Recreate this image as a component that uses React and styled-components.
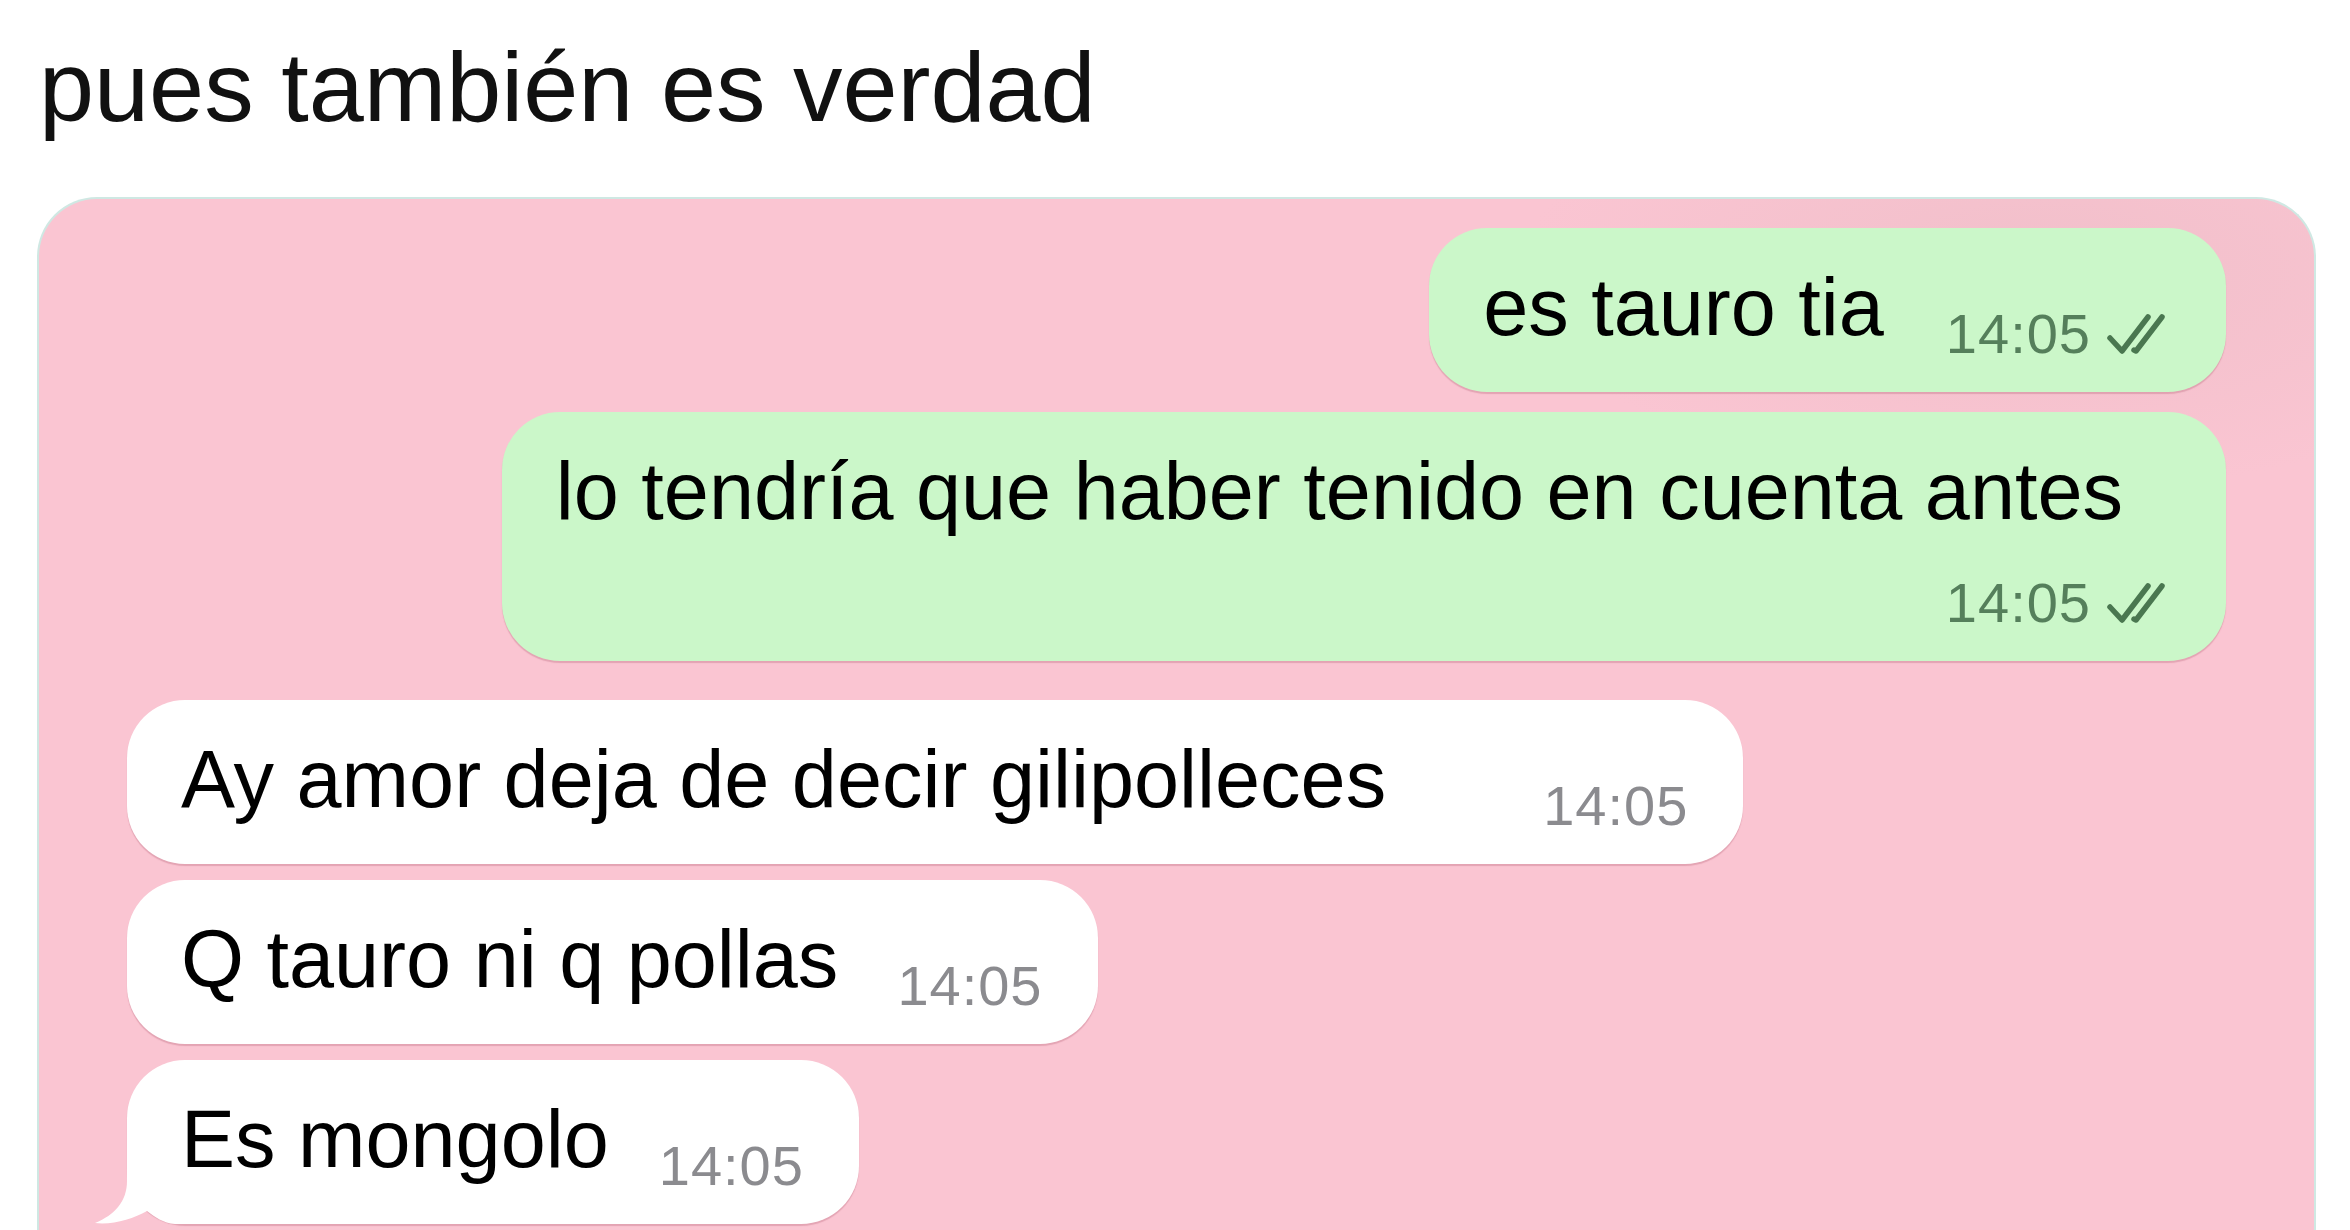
import React from "react";
import styled, { createGlobalStyle } from "styled-components";

const GlobalStyle = createGlobalStyle`
  html, body {
    margin: 0;
    padding: 0;
    background: #ffffff;
    overflow: hidden;
  }
  body {
    font-family: "Liberation Sans", Arial, sans-serif;
  }
`;

const Page = styled.div`
  padding: 37px 34px 0 37px;
  height: 1230px;
  box-sizing: border-box;
`;

const Title = styled.h1`
  margin: 0 0 61px 2px;
  font-size: 99px;
  line-height: 1;
  font-weight: 400;
  color: #111111;
`;

const Card = styled.div`
  border: 2px solid #cfe8e3;
  border-bottom: none;
  border-radius: 60px 60px 0 0;
  background: radial-gradient(ellipse 520px 220px at 88% 6%, #f1bfca 0%, rgba(241, 191, 202, 0) 100%),
    #fac5d2;
  padding: 29px 88px 200px 88px;
  display: flex;
  flex-direction: column;
  gap: 39px;
`;

const Group = styled.div`
  display: flex;
  flex-direction: column;
  align-items: ${(p) => (p.$out ? "flex-end" : "flex-start")};
  gap: ${(p) => (p.$out ? "20px" : "16px")};
`;

const Bubble = styled.div`
  position: relative;
  display: flex;
  flex-direction: ${(p) => (p.$stacked ? "column" : "row")};
  align-items: flex-end;
  box-sizing: border-box;
  min-height: 164px;
  padding: 31px 55px 36px 54px;
  border-radius: 58px;
  background: ${(p) => (p.$out ? "#cbf7c9" : "#ffffff")};
  box-shadow: 0 2px 1px rgba(170, 80, 100, 0.28);
`;

const Text = styled.span`
  position: relative;
  font-size: 81px;
  line-height: 97px;
  color: #000000;
  align-self: ${(p) => (p.$stacked ? "flex-start" : "auto")};
  margin-right: ${(p) => (p.$stacked ? "48px" : "0")};
`;

const Meta = styled.span`
  position: relative;
  display: flex;
  align-items: center;
  gap: 16px;
  margin-left: ${(p) => p.$space}px;
  margin-top: ${(p) => (p.$stacked ? "35px" : "0")};
  margin-bottom: -6px;
  font-size: 56px;
  line-height: 56px;
  letter-spacing: 1px;
  color: ${(p) => (p.$out ? "#557f5b" : "#8b8b8f")};
  white-space: nowrap;
`;

const Tail = styled.svg`
  position: absolute;
  left: -36px;
  bottom: -1px;
  width: 100px;
  height: 80px;
`;

const Ticks = () => (
  <svg width="64" height="42" viewBox="0 0 64 42" fill="none">
    <path
      d="M3 25 L15 38 L41 4"
      stroke="#4a7750"
      strokeWidth="5.5"
      strokeLinecap="round"
      strokeLinejoin="round"
    />
    <path
      d="M27 37 L29 38 L55 4"
      stroke="#4a7750"
      strokeWidth="5.5"
      strokeLinecap="round"
      strokeLinejoin="round"
    />
  </svg>
);

const Message = ({ text, out, stacked, space = 63, tail }) => (
  <Bubble $out={out} $stacked={stacked}>
    {tail && (
      <Tail viewBox="0 0 100 80">
        <path
          d="M36 0 L36 36 C36 56 24 70 4 78 C22 80 42 74 56 66 C64 72 72 78 84 79 L100 79 L100 0 Z"
          fill="#ffffff"
        />
      </Tail>
    )}
    <Text $stacked={stacked}>{text}</Text>
    <Meta $out={out} $stacked={stacked} $space={stacked ? 0 : space}>
      14:05
      {out && <Ticks />}
    </Meta>
  </Bubble>
);

const App = () => (
  <>
    <GlobalStyle />
    <Page>
      <Title>pues también es verdad</Title>
      <Card>
        <Group $out>
          <Message out text="es tauro tia" space={62} />
          <Message out stacked text="lo tendría que haber tenido en cuenta antes" />
        </Group>
        <Group>
          <Message text="Ay amor deja de decir gilipolleces" space={157} />
          <Message text="Q tauro ni q pollas" space={59} />
          <Message text="Es mongolo" space={50} tail />
        </Group>
      </Card>
    </Page>
  </>
);

export default App;
